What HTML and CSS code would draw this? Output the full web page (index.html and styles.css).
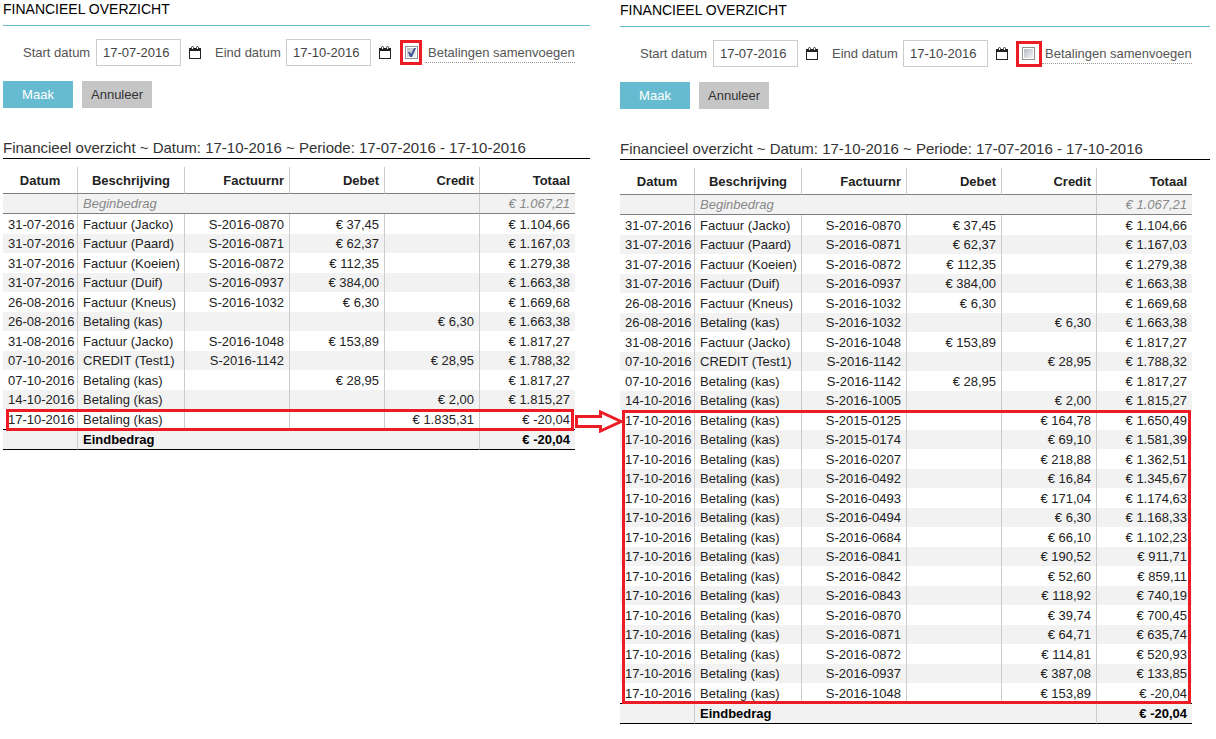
FILE: index.html
```
<!DOCTYPE html>
<html lang="nl">
<head>
<meta charset="utf-8">
<title>Financieel overzicht</title>
<link rel="stylesheet" href="styles.css">
</head>
<body>
<svg class="symbols" aria-hidden="true">
  <symbol id="calendar" viewBox="0 0 12 13">
    <path fill="#222" d="M0 2h12v11H0zM1 5v7h10V5z" fill-rule="evenodd"/>
    <path d="M2.500 3V1.500a1 1 0 0 1 2 0V3M7.500 3V1.500a1 1 0 0 1 2 0V3" fill="#fff" stroke="#333"/>
  </symbol>
</svg>
<main class="comparison">
  <section class="panel">
    <h1 class="title">FINANCIEEL OVERZICHT</h1>
    <form class="filters">
      <div class="fields">
        <label class="label" for="start-a">Start datum</label>
        <input class="date" id="start-a" type="text" value="17-07-2016">
        <svg class="calendar"><use href="#calendar"/></svg>
        <label class="label label-end" for="end-a">Eind datum</label>
        <input class="date" id="end-a" type="text" value="17-10-2016">
        <svg class="calendar"><use href="#calendar"/></svg>
        <span class="check-wrap check-tight"><input class="check" id="merge-a" type="checkbox" checked></span>
        <label class="merge" for="merge-a">Betalingen samenvoegen</label>
      </div>
      <div class="actions">
        <button class="button primary" type="button">Maak</button>
        <button class="button" type="button">Annuleer</button>
      </div>
    </form>
    <h2 class="subtitle">Financieel overzicht ~ Datum: 17-10-2016 ~ Periode: 17-07-2016 - 17-10-2016</h2>
    <div class="report">
      <table class="ledger">
        <colgroup><col class="c-date"><col class="c-desc"><col class="c-inv"><col class="c-sum"><col class="c-sum"><col class="c-sum"></colgroup>
        <thead>
          <tr><th>Datum</th><th>Beschrijving</th><th>Factuurnr</th><th>Debet</th><th>Credit</th><th>Totaal</th></tr>
          <tr class="opening"><td></td><td colspan="4">Beginbedrag</td><td>€ 1.067,21</td></tr>
        </thead>
        <tbody>
          <tr><td>31-07-2016</td><td>Factuur (Jacko)</td><td>S-2016-0870</td><td>€ 37,45</td><td></td><td>€ 1.104,66</td></tr>
          <tr><td>31-07-2016</td><td>Factuur (Paard)</td><td>S-2016-0871</td><td>€ 62,37</td><td></td><td>€ 1.167,03</td></tr>
          <tr><td>31-07-2016</td><td>Factuur (Koeien)</td><td>S-2016-0872</td><td>€ 112,35</td><td></td><td>€ 1.279,38</td></tr>
          <tr><td>31-07-2016</td><td>Factuur (Duif)</td><td>S-2016-0937</td><td>€ 384,00</td><td></td><td>€ 1.663,38</td></tr>
          <tr><td>26-08-2016</td><td>Factuur (Kneus)</td><td>S-2016-1032</td><td>€ 6,30</td><td></td><td>€ 1.669,68</td></tr>
          <tr><td>26-08-2016</td><td>Betaling (kas)</td><td></td><td></td><td>€ 6,30</td><td>€ 1.663,38</td></tr>
          <tr><td>31-08-2016</td><td>Factuur (Jacko)</td><td>S-2016-1048</td><td>€ 153,89</td><td></td><td>€ 1.817,27</td></tr>
          <tr><td>07-10-2016</td><td>CREDIT (Test1)</td><td>S-2016-1142</td><td></td><td>€ 28,95</td><td>€ 1.788,32</td></tr>
          <tr><td>07-10-2016</td><td>Betaling (kas)</td><td></td><td>€ 28,95</td><td></td><td>€ 1.817,27</td></tr>
          <tr><td>14-10-2016</td><td>Betaling (kas)</td><td></td><td></td><td>€ 2,00</td><td>€ 1.815,27</td></tr>
          <tr><td>17-10-2016</td><td>Betaling (kas)</td><td></td><td></td><td>€ 1.835,31</td><td>€ -20,04</td></tr>
        </tbody>
        <tfoot>
          <tr><td></td><td colspan="4">Eindbedrag</td><td>€ -20,04</td></tr>
        </tfoot>
      </table>
      <div class="marker marker-single"></div>
      <svg class="arrow" viewBox="0 0 48 23"><path d="M1.500 6.500H25.500V2L46 11.500 25.500 21V16.500H1.500z" fill="#fff" stroke="#ed1c24" stroke-width="3"/></svg>
    </div>
  </section>

  <section class="panel panel-split">
    <h1 class="title">FINANCIEEL OVERZICHT</h1>
    <form class="filters">
      <div class="fields">
        <label class="label" for="start-b">Start datum</label>
        <input class="date" id="start-b" type="text" value="17-07-2016">
        <svg class="calendar"><use href="#calendar"/></svg>
        <label class="label label-end" for="end-b">Eind datum</label>
        <input class="date" id="end-b" type="text" value="17-10-2016">
        <svg class="calendar"><use href="#calendar"/></svg>
        <span class="check-wrap"><input class="check" id="merge-b" type="checkbox"></span>
        <label class="merge" for="merge-b">Betalingen samenvoegen</label>
      </div>
      <div class="actions">
        <button class="button primary" type="button">Maak</button>
        <button class="button" type="button">Annuleer</button>
      </div>
    </form>
    <h2 class="subtitle">Financieel overzicht ~ Datum: 17-10-2016 ~ Periode: 17-07-2016 - 17-10-2016</h2>
    <div class="report">
      <table class="ledger">
        <colgroup><col class="c-date"><col class="c-desc"><col class="c-inv"><col class="c-sum"><col class="c-sum"><col class="c-sum"></colgroup>
        <thead>
          <tr><th>Datum</th><th>Beschrijving</th><th>Factuurnr</th><th>Debet</th><th>Credit</th><th>Totaal</th></tr>
          <tr class="opening"><td></td><td colspan="4">Beginbedrag</td><td>€ 1.067,21</td></tr>
        </thead>
        <tbody>
          <tr><td>31-07-2016</td><td>Factuur (Jacko)</td><td>S-2016-0870</td><td>€ 37,45</td><td></td><td>€ 1.104,66</td></tr>
          <tr><td>31-07-2016</td><td>Factuur (Paard)</td><td>S-2016-0871</td><td>€ 62,37</td><td></td><td>€ 1.167,03</td></tr>
          <tr><td>31-07-2016</td><td>Factuur (Koeien)</td><td>S-2016-0872</td><td>€ 112,35</td><td></td><td>€ 1.279,38</td></tr>
          <tr><td>31-07-2016</td><td>Factuur (Duif)</td><td>S-2016-0937</td><td>€ 384,00</td><td></td><td>€ 1.663,38</td></tr>
          <tr><td>26-08-2016</td><td>Factuur (Kneus)</td><td>S-2016-1032</td><td>€ 6,30</td><td></td><td>€ 1.669,68</td></tr>
          <tr><td>26-08-2016</td><td>Betaling (kas)</td><td>S-2016-1032</td><td></td><td>€ 6,30</td><td>€ 1.663,38</td></tr>
          <tr><td>31-08-2016</td><td>Factuur (Jacko)</td><td>S-2016-1048</td><td>€ 153,89</td><td></td><td>€ 1.817,27</td></tr>
          <tr><td>07-10-2016</td><td>CREDIT (Test1)</td><td>S-2016-1142</td><td></td><td>€ 28,95</td><td>€ 1.788,32</td></tr>
          <tr><td>07-10-2016</td><td>Betaling (kas)</td><td>S-2016-1142</td><td>€ 28,95</td><td></td><td>€ 1.817,27</td></tr>
          <tr><td>14-10-2016</td><td>Betaling (kas)</td><td>S-2016-1005</td><td></td><td>€ 2,00</td><td>€ 1.815,27</td></tr>
          <tr><td>17-10-2016</td><td>Betaling (kas)</td><td>S-2015-0125</td><td></td><td>€ 164,78</td><td>€ 1.650,49</td></tr>
          <tr><td>17-10-2016</td><td>Betaling (kas)</td><td>S-2015-0174</td><td></td><td>€ 69,10</td><td>€ 1.581,39</td></tr>
          <tr><td>17-10-2016</td><td>Betaling (kas)</td><td>S-2016-0207</td><td></td><td>€ 218,88</td><td>€ 1.362,51</td></tr>
          <tr><td>17-10-2016</td><td>Betaling (kas)</td><td>S-2016-0492</td><td></td><td>€ 16,84</td><td>€ 1.345,67</td></tr>
          <tr><td>17-10-2016</td><td>Betaling (kas)</td><td>S-2016-0493</td><td></td><td>€ 171,04</td><td>€ 1.174,63</td></tr>
          <tr><td>17-10-2016</td><td>Betaling (kas)</td><td>S-2016-0494</td><td></td><td>€ 6,30</td><td>€ 1.168,33</td></tr>
          <tr><td>17-10-2016</td><td>Betaling (kas)</td><td>S-2016-0684</td><td></td><td>€ 66,10</td><td>€ 1.102,23</td></tr>
          <tr><td>17-10-2016</td><td>Betaling (kas)</td><td>S-2016-0841</td><td></td><td>€ 190,52</td><td>€ 911,71</td></tr>
          <tr><td>17-10-2016</td><td>Betaling (kas)</td><td>S-2016-0842</td><td></td><td>€ 52,60</td><td>€ 859,11</td></tr>
          <tr><td>17-10-2016</td><td>Betaling (kas)</td><td>S-2016-0843</td><td></td><td>€ 118,92</td><td>€ 740,19</td></tr>
          <tr><td>17-10-2016</td><td>Betaling (kas)</td><td>S-2016-0870</td><td></td><td>€ 39,74</td><td>€ 700,45</td></tr>
          <tr><td>17-10-2016</td><td>Betaling (kas)</td><td>S-2016-0871</td><td></td><td>€ 64,71</td><td>€ 635,74</td></tr>
          <tr><td>17-10-2016</td><td>Betaling (kas)</td><td>S-2016-0872</td><td></td><td>€ 114,81</td><td>€ 520,93</td></tr>
          <tr><td>17-10-2016</td><td>Betaling (kas)</td><td>S-2016-0937</td><td></td><td>€ 387,08</td><td>€ 133,85</td></tr>
          <tr><td>17-10-2016</td><td>Betaling (kas)</td><td>S-2016-1048</td><td></td><td>€ 153,89</td><td>€ -20,04</td></tr>
        </tbody>
        <tfoot>
          <tr><td></td><td colspan="4">Eindbedrag</td><td>€ -20,04</td></tr>
        </tfoot>
      </table>
      <div class="marker marker-group"></div>
    </div>
  </section>
</main>
</body>
</html>
```
FILE: styles.css
```
* { box-sizing: border-box; }

body {
  margin: 0;
  background: #fff;
  color: #222;
  font: 13px/19px "Liberation Sans", Arial, sans-serif;
}

.symbols { display: none; }

.comparison {
  display: grid;
  grid-template-columns: 587fr 590fr;
  column-gap: 30px;
  align-items: start;
  padding: 0 6px 0 3px;
}

.panel { min-width: 0; }
.panel-split { padding-top: 1px; }

.title {
  margin: 0;
  padding-bottom: 6px;
  border-bottom: 1px solid #66bbd0;
  color: #000;
  font-size: 14px;
  font-weight: 400;
  line-height: 19px;
}

.fields {
  display: flex;
  align-items: center;
  height: 27px;
  margin-top: 13px;
  padding-left: 20px;
  color: #555;
}

.label { width: 73px; white-space: nowrap; }
.label-end { width: 71px; margin-left: 14px; }

.date {
  width: 85px;
  height: 27px;
  padding: 0 6px;
  border: 1px solid #ccc;
  background: #fff;
  color: #444;
  font: inherit;
}

.calendar { width: 12px; height: 13px; margin-left: 8px; }

.check-wrap {
  position: relative;
  display: flex;
  margin-left: 14px;
}

.check-wrap::after {
  content: "";
  position: absolute;
  inset: -6px -7px -7px -6px;
  border: 3px solid #ed1c24;
  pointer-events: none;
}

.check-tight::after { inset: -6px -4px -6px -5px; }

.check {
  appearance: none;
  width: 13px;
  height: 13px;
  margin: 0;
  padding: 1px;
  border: 1px solid #8e8f8f;
  background: linear-gradient(135deg, #b4bac4, #f6f6f6) content-box #f4f4f4;
}

.check:checked::before {
  content: "";
  display: block;
  width: 9px;
  height: 9px;
  background: #3f5597;
  clip-path: polygon(1px 4px, 3px 4px, 4px 6px, 7px 0, 9px 0, 5px 9px, 3px 9px);
}

.merge {
  margin-left: 7px;
  padding-left: 3px;
  border-bottom: 1px dotted #999;
  white-space: nowrap;
}

.actions { display: flex; gap: 9px; margin-top: 15px; }

.button {
  height: 27px;
  padding: 0 9px;
  min-width: 70px;
  border: 0;
  background: #c6c6c6;
  color: #333;
  font: inherit;
}

.primary { background: #66bbd0; color: #fff; }

.subtitle {
  margin: 30px 0 0;
  border-bottom: 1px solid #000;
  color: #333;
  font-size: 15px;
  font-weight: 400;
  line-height: 20px;
  white-space: nowrap;
}

.report { position: relative; width: 572px; margin-top: 8px; }

.ledger {
  width: 100%;
  table-layout: fixed;
  border-collapse: separate;
  border-spacing: 0;
}

.c-date { width: 75px; }
.c-desc { width: 107px; }
.c-inv { width: 105px; }
.c-sum { width: 95px; }

.ledger th,
.ledger td {
  height: 19px;
  padding: 0 5px;
  border-right: 1px solid #ccc;
  line-height: 19px;
  text-align: right;
  white-space: nowrap;
}

.ledger th:last-child,
.ledger td:last-child { border-right: 0; }

.ledger th:nth-child(-n+2) { text-align: center; }
.ledger td:nth-child(-n+2) { text-align: left; }
.ledger th { height: 27px; border-bottom: 1px solid #808080; }

.ledger .opening td {
  height: 20px;
  border-bottom: 1px solid #808080;
  background: #f2f2f2;
  color: #888;
  font-style: italic;
}

.ledger tbody tr:nth-child(odd) td { height: 20px; }
.ledger tbody tr:nth-child(even) { background: #f2f2f2; }

.ledger tfoot td {
  height: 21px;
  border-top: 1px solid #000;
  border-bottom: 1px solid #000;
  background: #f2f2f2;
  color: #000;
  font-weight: 700;
}

.marker {
  position: absolute;
  border: 3px solid #ed1c24;
  pointer-events: none;
}

.marker-single { left: 3px; right: 1px; bottom: 19px; height: 22px; }
.marker-group { left: 2px; right: 1px; bottom: 20px; height: 294px; }

.arrow {
  position: absolute;
  left: 572px;
  bottom: 17px;
  width: 48px;
  height: 23px;
}
```
